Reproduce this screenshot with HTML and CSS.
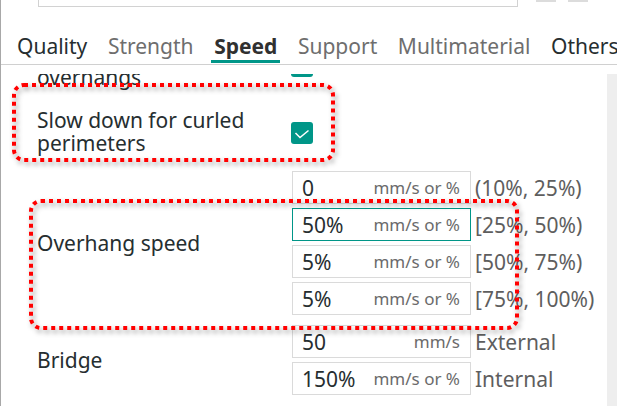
FILE: index.html
```html
<!DOCTYPE html>
<html>
<head>
<meta charset="utf-8">
<link rel="stylesheet" href="styles.css">
</head>
<body>
<div class="app">
  <div class="header">
    <div class="search"></div>
    <div class="hbtn"></div>
    <div class="hbtn"></div>
  </div>
  <nav class="tabs">
    <span class="tab dark">Quality</span>
    <span class="tab">Strength</span>
    <span class="tab active">Speed</span>
    <span class="tab">Support</span>
    <span class="tab">Multimaterial</span>
    <span class="tab dark">Others</span>
  </nav>
  <div class="main">
    <div class="viewport">
      <div class="list">
        <div class="row top-row">
          <div class="label clipped">overhangs</div>
          <div class="checkbox"><svg viewBox="0 0 22 22" width="22" height="22"><polyline points="4.5,11 9,15.5 17.5,8.5" fill="none" stroke="#fff" stroke-width="1.5"/></svg></div>
        </div>
        <div class="row check-row">
          <div class="label">Slow down for curled<br>perimeters</div>
          <div class="checkbox"><svg viewBox="0 0 22 22" width="22" height="22"><polyline points="4.5,11 9,15.5 17.5,8.5" fill="none" stroke="#fff" stroke-width="1.5"/></svg></div>
        </div>
        <div class="row field-row overhang">
          <div class="label group-label">Overhang speed</div>
          <div class="fields">
            <div class="field-line"><div class="input"><span class="val">0</span><span class="unit">mm/s or %</span></div><span class="side">(10%, 25%)</span></div>
            <div class="field-line"><div class="input focus"><span class="val">50%</span><span class="unit">mm/s or %</span></div><span class="side">[25%, 50%)</span></div>
            <div class="field-line"><div class="input"><span class="val">5%</span><span class="unit">mm/s or %</span></div><span class="side">[50%, 75%)</span></div>
            <div class="field-line"><div class="input"><span class="val">5%</span><span class="unit">mm/s or %</span></div><span class="side">[75%, 100%)</span></div>
          </div>
        </div>
        <div class="row field-row bridge">
          <div class="label group-label">Bridge</div>
          <div class="fields">
            <div class="field-line"><div class="input"><span class="val">50</span><span class="unit">mm/s</span></div><span class="side">External</span></div>
            <div class="field-line"><div class="input"><span class="val">150%</span><span class="unit">mm/s or %</span></div><span class="side">Internal</span></div>
          </div>
        </div>
      </div>
    </div>
    <div class="scrollbar"></div>
  </div>
  <svg class="annot" width="617" height="406" viewBox="0 0 617 406">
    <defs>
      <filter id="sh" x="-10%" y="-10%" width="120%" height="130%">
        <feDropShadow dx="2" dy="3" stdDeviation="2.5" flood-color="#000" flood-opacity="0.4"/>
      </filter>
    </defs>
    <rect x="14" y="85" width="319" height="75" rx="10" fill="none" stroke="#f00" stroke-width="4" stroke-dasharray="4 4" filter="url(#sh)"/>
    <rect x="31" y="201" width="486" height="127" rx="10" fill="none" stroke="#f00" stroke-width="4" stroke-dasharray="4 4" filter="url(#sh)"/>
  </svg>
</div>
</body>
</html>
```

FILE: styles.css
```css
* { box-sizing: border-box; }
html, body { margin: 0; padding: 0; }
body {
  width: 617px;
  height: 406px;
  overflow: hidden;
  background: #fff;
  font-family: "Noto Sans", sans-serif;
  color: #262e30;
}
.app {
  position: relative;
  width: 617px;
  height: 406px;
  border-left: 1px solid #a8a8a8;
  display: flex;
  flex-direction: column;
}
.header {
  height: 7px;
  flex: none;
  display: flex;
  align-items: flex-end;
  padding-left: 37px;
}
.search {
  width: 480px;
  height: 40px;
  border: 1px solid #d2d2d2;
  background: #fff;
  flex: none;
}
.hbtn {
  width: 20px;
  height: 20px;
  background: #dcdcdc;
  margin-bottom: 5px;
  flex: none;
}
.search + .hbtn { margin-left: 18px; }
.hbtn + .hbtn { margin-left: 12px; }
.tabs {
  height: 58px;
  flex: none;
  display: flex;
  align-items: flex-end;
  gap: 14.6px;
  padding-left: 13px;
  border-bottom: 1px solid #d0d0d0;
  white-space: nowrap;
  overflow: hidden;
}
.tab {
  font-size: 21px;
  line-height: 28px;
  padding: 0 3px;
  border-bottom: 3px solid transparent;
  margin-bottom: 1px;
  color: #6e6e6e;
  flex: none;
}
.tab.dark { color: #262e30; }
.tab.active {
  font-weight: 700;
  color: #303030;
  border-bottom-color: #009688;
}
.main {
  flex: 1;
  display: flex;
  min-height: 0;
}
.viewport {
  flex: 1;
  margin-top: 9px;
  overflow: hidden;
}
.scrollbar {
  width: 10px;
  margin-top: 9px;
  background: #eeeeee;
  flex: none;
}
.list {
  margin-top: -19px;
  padding-left: 36px;
}
.row {
  display: flex;
}
.label {
  width: 254px;
  flex: none;
  font-size: 21px;
  line-height: 23px;
  color: #262e30;
}
.top-row {
  align-items: flex-start;
  padding-bottom: 10px;
}
.top-row .label { margin-top: 11px; }
.check-row {
  padding: 10px 0;
  align-items: center;
}
.check-row .checkbox { margin-top: 2px; }
.checkbox {
  width: 22px;
  height: 22px;
  border-radius: 3px;
  background: #009688;
  display: flex;
  flex: none;
}
.field-row { align-items: center; }
.overhang { padding: 6px 0 5px; }
.bridge { padding: 5px 0 0; }
.fields {
  display: flex;
  flex-direction: column;
  gap: 4px;
  margin-left: 1px;
}
.field-line {
  display: flex;
  align-items: center;
  gap: 4px;
}
.input {
  width: 179px;
  height: 33px;
  border: 1px solid #dadada;
  display: flex;
  align-items: center;
  justify-content: space-between;
  padding: 0 10px 0 9px;
  background: #fff;
}
.input.focus { border-color: #009688; }
.val {
  font-size: 21px;
  color: #262e30;
}
.unit {
  font-size: 17px;
  color: #6b6b6b;
}
.side {
  font-size: 21px;
  color: #5e5e5e;
  white-space: nowrap;
}
.annot {
  position: absolute;
  left: -1px;
  top: 0;
  pointer-events: none;
}
```
